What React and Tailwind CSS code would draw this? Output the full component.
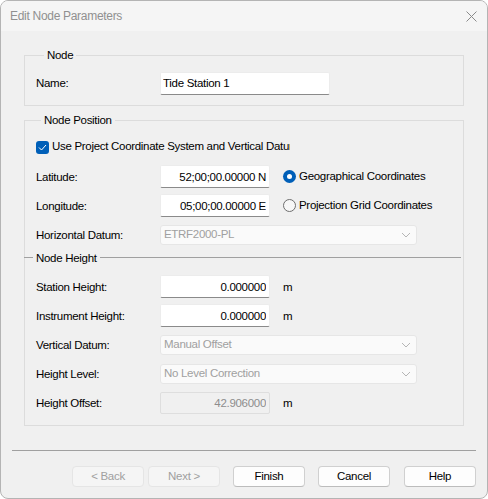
import React from "react"

const font = { fontFamily: '"Liberation Sans", Arial, sans-serif' }

const TextBox = ({ value, right, disabled, wide }) => (
    <input
        readOnly
        value={value}
        className={
            (wide ? "w-[170px] " : "w-[110px] ") +
            (right ? "text-right pr-[3px] " : "pl-[2px] ") +
            (disabled
                ? "h-[22px] bg-[#f0f0f0] border border-[#dedede] text-[#8d8d8d] "
                : "h-[23px] bg-white border border-[#ececec] border-b-[#8a8a8a] text-black ") +
            "outline-none rounded-[2px]"
        }
    />
)

const Combo = ({ value }) => (
    <div className="w-[257px] h-[20px] flex items-center justify-between bg-[#fafafa] border border-[#e6e6e6] rounded-[3px] pl-[3px] pr-[5px] text-[#a0a0a0]">
        <span className="pt-[1px]">{value}</span>
        <svg width="10" height="6" viewBox="0 0 10 6">
            <path d="M1 1 L5 5 L9 1" fill="none" stroke="#b5b5b5" strokeWidth="1" />
        </svg>
    </div>
)

const Row = ({ label, children }) => (
    <div className="h-[29px] flex items-center">
        <div className="w-[124px] pt-[2px]">{label}</div>
        {children}
    </div>
)

const Radio = ({ checked, label }) => (
    <div className="flex items-center ml-[13px] gap-[3px]">
        {checked ? (
            <span className="w-[13px] h-[13px] rounded-full bg-[#005fb8] flex items-center justify-center">
                <span className="w-[5px] h-[5px] rounded-full bg-white" />
            </span>
        ) : (
            <span className="w-[13px] h-[13px] rounded-full border border-[#6e6e6e] bg-[#f7f7f7]" />
        )}
        <span className="pt-[1px]">{label}</span>
    </div>
)

const Unit = () => <span className="ml-[13px] pt-[2px]">m</span>

const Button = ({ label, disabled, className }) => (
    <button
        className={
            "w-[72px] h-[21px] rounded-[4px] border " +
            (disabled
                ? "bg-[#f5f5f5] border-[#e5e5e5] text-[#a0a0a0] "
                : "bg-[#fdfdfd] border-[#d0d0d0] border-b-[#bcbcbc] text-black ") +
            (className || "")
        }
    >
        {label}
    </button>
)

export default function App() {
    return (
        <div className="w-[488px] h-[499px] bg-white text-[11.5px] tracking-[-0.3px] text-black" style={font}>
            <div className="w-[488px] h-[499px] rounded-[8px] border border-[#b4b4b4] bg-[#f0f0f0] overflow-hidden flex flex-col">
                <div className="h-[30px] bg-[#f5f5f5] flex items-center justify-between pl-[9px] pr-[10px] shrink-0">
                    <span className="text-[12px] text-[#909090]">Edit Node Parameters</span>
                    <svg width="11" height="11" viewBox="0 0 11 11">
                        <path d="M0.5 0.5 L10.5 10.5 M10.5 0.5 L0.5 10.5" stroke="#8a8a8a" strokeWidth="1" />
                    </svg>
                </div>

                <div className="px-[23px] pt-[16px]">
                    <fieldset className="border border-[#dcdcdc] pl-[11px] pb-[11px]">
                        <legend className="ml-[8px] px-[3px] leading-[16px]">Node</legend>
                        <div className="mt-[9px] flex items-center h-[22px]">
                            <div className="w-[124px] pt-[1px]">Name:</div>
                            <TextBox value="Tide Station 1" wide />
                        </div>
                    </fieldset>

                    <fieldset className="mt-[6px] border border-[#dcdcdc] pl-[11px] pb-[8px]">
                        <legend className="ml-[5px] px-[3px] leading-[16px]">Node Position</legend>
                        <div className="mt-[9px] h-[20px] flex items-center gap-[3px]">
                            <span className="w-[13px] h-[13px] rounded-[3px] bg-[#005fb8] flex items-center justify-center">
                                <svg width="9" height="7" viewBox="0 0 9 7">
                                    <path d="M1 3.5 L3.5 6 L8 1" fill="none" stroke="white" strokeWidth="1" />
                                </svg>
                            </span>
                            <span className="w-[238px] overflow-hidden whitespace-nowrap">
                                Use Project Coordinate System and Vertical Datum
                            </span>
                        </div>
                        <div className="mt-[5px]">
                            <Row label="Latitude:">
                                <TextBox value="52;00;00.00000 N" right />
                                <Radio checked label="Geographical Coordinates" />
                            </Row>
                            <Row label="Longitude:">
                                <TextBox value="05;00;00.00000 E" right />
                                <Radio label="Projection Grid Coordinates" />
                            </Row>
                            <Row label="Horizontal Datum:">
                                <Combo value="ETRF2000-PL" />
                            </Row>
                        </div>
                        <div className="h-[17px] flex items-center -ml-[12px] mr-[2px]">
                            <span className="w-[9px] h-px bg-[#a0a0a0]" />
                            <span className="px-[3px] pt-[2px]">Node Height</span>
                            <span className="flex-1 h-px bg-[#a0a0a0]" />
                        </div>
                        <div className="mt-[6px]">
                            <Row label="Station Height:">
                                <TextBox value="0.000000" right />
                                <Unit />
                            </Row>
                            <Row label="Instrument Height:">
                                <TextBox value="0.000000" right />
                                <Unit />
                            </Row>
                            <Row label="Vertical Datum:">
                                <Combo value="Manual Offset" />
                            </Row>
                            <Row label="Height Level:">
                                <Combo value="No Level Correction" />
                            </Row>
                            <Row label="Height Offset:">
                                <TextBox value="42.906000" right disabled />
                                <Unit />
                            </Row>
                        </div>
                    </fieldset>
                </div>

                <div className="mx-[11px] mt-[24px] h-px bg-[#a0a0a0]" />

                <div className="mt-[15px] flex justify-end pr-[11px]">
                    <Button label="< Back" disabled />
                    <Button label="Next >" disabled className="ml-[4px]" />
                    <Button label="Finish" className="ml-[13px]" />
                    <Button label="Cancel" className="ml-[13px]" />
                    <Button label="Help" className="ml-[14px]" />
                </div>
            </div>
        </div>
    )
}
